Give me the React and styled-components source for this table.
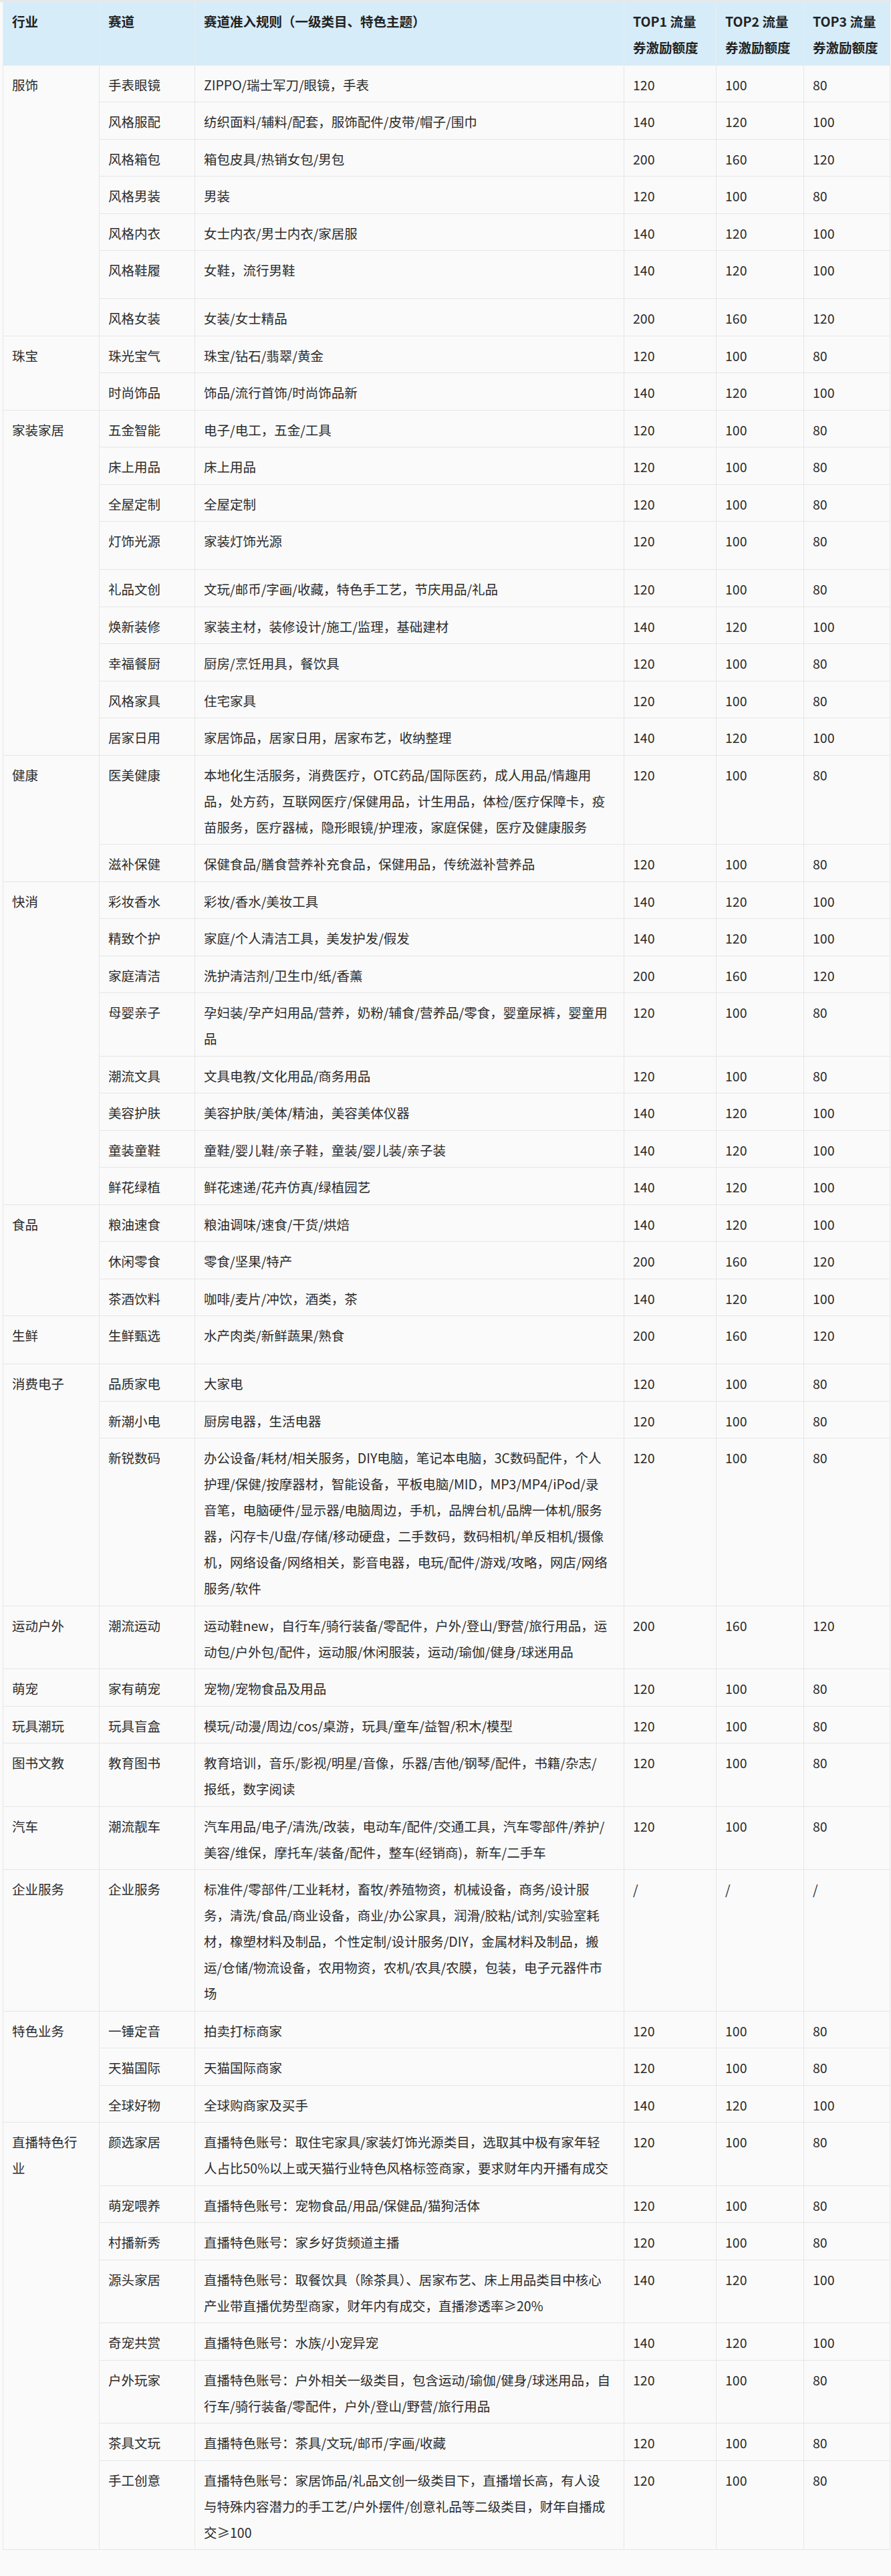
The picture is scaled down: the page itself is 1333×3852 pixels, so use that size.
import styled, { createGlobalStyle } from "styled-components";

const GlobalStyle = createGlobalStyle`
  body {
    margin: 0;
    background: #fafafa;
    color: #2b2b2b;
    font-family: "Noto Sans CJK SC", "Noto Sans", sans-serif;
  }
`;

const Page = styled.div`
  border-top: 3px solid #e8e8e8;
  padding: 0 2px 30px 4px;
`;

const Table = styled.table`
  width: 1327px;
  table-layout: fixed;
  border-collapse: collapse;
  border: 1px solid #e4e4e4;
  border-top: none;
  font-size: 19.5px;
  line-height: 39px;
`;

const Col = styled.col`
  width: ${(p) => p.$w}px;
`;

const HeadCell = styled.th`
  background: #d6ecf9;
  color: #222;
  font-weight: 700;
  text-align: left;
  vertical-align: top;
  white-space: pre-line;
  padding: 9px 13px 6.7px;
  border-left: 1px solid #e4eef4;
`;

const Row = styled.tr`
  height: ${(p) => (p.$tall ? "72px" : "auto")};
`;

const Cell = styled.td`
  vertical-align: top;
  white-space: pre-line;
  padding: 9px 13px 6.5px;
  border: 1px solid #e6e6e6;
`;

const cols = [144, 143, 642, 138, 131, 129];

const data = [
  {
    industry: "服饰",
    rows: [
      ["手表眼镜", "ZIPPO/瑞士军刀/眼镜，手表", [120, 100, 80]],
      ["风格服配", "纺织面料/辅料/配套，服饰配件/皮带/帽子/围巾", [140, 120, 100]],
      ["风格箱包", "箱包皮具/热销女包/男包", [200, 160, 120]],
      ["风格男装", "男装", [120, 100, 80]],
      ["风格内衣", "女士内衣/男士内衣/家居服", [140, 120, 100]],
      ["风格鞋履", "女鞋，流行男鞋", [140, 120, 100], true],
      ["风格女装", "女装/女士精品", [200, 160, 120]],
    ],
  },
  {
    industry: "珠宝",
    rows: [
      ["珠光宝气", "珠宝/钻石/翡翠/黄金", [120, 100, 80]],
      ["时尚饰品", "饰品/流行首饰/时尚饰品新", [140, 120, 100]],
    ],
  },
  {
    industry: "家装家居",
    rows: [
      ["五金智能", "电子/电工，五金/工具", [120, 100, 80]],
      ["床上用品", "床上用品", [120, 100, 80]],
      ["全屋定制", "全屋定制", [120, 100, 80]],
      ["灯饰光源", "家装灯饰光源", [120, 100, 80], true],
      ["礼品文创", "文玩/邮币/字画/收藏，特色手工艺，节庆用品/礼品", [120, 100, 80]],
      ["焕新装修", "家装主材，装修设计/施工/监理，基础建材", [140, 120, 100]],
      ["幸福餐厨", "厨房/烹饪用具，餐饮具", [120, 100, 80]],
      ["风格家具", "住宅家具", [120, 100, 80]],
      ["居家日用", "家居饰品，居家日用，居家布艺，收纳整理", [140, 120, 100]],
    ],
  },
  {
    industry: "健康",
    rows: [
      [
        "医美健康",
        "本地化生活服务，消费医疗，OTC药品/国际医药，成人用品/情趣用\n品，处方药，互联网医疗/保健用品，计生用品，体检/医疗保障卡，疫\n苗服务，医疗器械，隐形眼镜/护理液，家庭保健，医疗及健康服务",
        [120, 100, 80],
      ],
      ["滋补保健", "保健食品/膳食营养补充食品，保健用品，传统滋补营养品", [120, 100, 80]],
    ],
  },
  {
    industry: "快消",
    rows: [
      ["彩妆香水", "彩妆/香水/美妆工具", [140, 120, 100]],
      ["精致个护", "家庭/个人清洁工具，美发护发/假发", [140, 120, 100]],
      ["家庭清洁", "洗护清洁剂/卫生巾/纸/香薰", [200, 160, 120]],
      [
        "母婴亲子",
        "孕妇装/孕产妇用品/营养，奶粉/辅食/营养品/零食，婴童尿裤，婴童用\n品",
        [120, 100, 80],
      ],
      ["潮流文具", "文具电教/文化用品/商务用品", [120, 100, 80]],
      ["美容护肤", "美容护肤/美体/精油，美容美体仪器", [140, 120, 100]],
      ["童装童鞋", "童鞋/婴儿鞋/亲子鞋，童装/婴儿装/亲子装", [140, 120, 100]],
      ["鲜花绿植", "鲜花速递/花卉仿真/绿植园艺", [140, 120, 100]],
    ],
  },
  {
    industry: "食品",
    rows: [
      ["粮油速食", "粮油调味/速食/干货/烘焙", [140, 120, 100]],
      ["休闲零食", "零食/坚果/特产", [200, 160, 120]],
      ["茶酒饮料", "咖啡/麦片/冲饮，酒类，茶", [140, 120, 100]],
    ],
  },
  {
    industry: "生鲜",
    rows: [["生鲜甄选", "水产肉类/新鲜蔬果/熟食", [200, 160, 120], true]],
  },
  {
    industry: "消费电子",
    rows: [
      ["品质家电", "大家电", [120, 100, 80]],
      ["新潮小电", "厨房电器，生活电器", [120, 100, 80]],
      [
        "新锐数码",
        "办公设备/耗材/相关服务，DIY电脑，笔记本电脑，3C数码配件，个人\n护理/保健/按摩器材，智能设备，平板电脑/MID，MP3/MP4/iPod/录\n音笔，电脑硬件/显示器/电脑周边，手机，品牌台机/品牌一体机/服务\n器，闪存卡/U盘/存储/移动硬盘，二手数码，数码相机/单反相机/摄像\n机，网络设备/网络相关，影音电器，电玩/配件/游戏/攻略，网店/网络\n服务/软件",
        [120, 100, 80],
      ],
    ],
  },
  {
    industry: "运动户外",
    rows: [
      [
        "潮流运动",
        "运动鞋new，自行车/骑行装备/零配件，户外/登山/野营/旅行用品，运\n动包/户外包/配件，运动服/休闲服装，运动/瑜伽/健身/球迷用品",
        [200, 160, 120],
      ],
    ],
  },
  {
    industry: "萌宠",
    rows: [["家有萌宠", "宠物/宠物食品及用品", [120, 100, 80]]],
  },
  {
    industry: "玩具潮玩",
    rows: [["玩具盲盒", "模玩/动漫/周边/cos/桌游，玩具/童车/益智/积木/模型", [120, 100, 80]]],
  },
  {
    industry: "图书文教",
    rows: [
      [
        "教育图书",
        "教育培训，音乐/影视/明星/音像，乐器/吉他/钢琴/配件，书籍/杂志/\n报纸，数字阅读",
        [120, 100, 80],
      ],
    ],
  },
  {
    industry: "汽车",
    rows: [
      [
        "潮流靓车",
        "汽车用品/电子/清洗/改装，电动车/配件/交通工具，汽车零部件/养护/\n美容/维保，摩托车/装备/配件，整车(经销商)，新车/二手车",
        [120, 100, 80],
      ],
    ],
  },
  {
    industry: "企业服务",
    rows: [
      [
        "企业服务",
        "标准件/零部件/工业耗材，畜牧/养殖物资，机械设备，商务/设计服\n务，清洗/食品/商业设备，商业/办公家具，润滑/胶粘/试剂/实验室耗\n材，橡塑材料及制品，个性定制/设计服务/DIY，金属材料及制品，搬\n运/仓储/物流设备，农用物资，农机/农具/农膜，包装，电子元器件市\n场",
        ["/", "/", "/"],
      ],
    ],
  },
  {
    industry: "特色业务",
    rows: [
      ["一锤定音", "拍卖打标商家", [120, 100, 80]],
      ["天猫国际", "天猫国际商家", [120, 100, 80]],
      ["全球好物", "全球购商家及买手", [140, 120, 100]],
    ],
  },
  {
    industry: "直播特色行\n业",
    rows: [
      [
        "颜选家居",
        "直播特色账号：取住宅家具/家装灯饰光源类目，选取其中极有家年轻\n人占比50%以上或天猫行业特色风格标签商家，要求财年内开播有成交",
        [120, 100, 80],
      ],
      ["萌宠喂养", "直播特色账号：宠物食品/用品/保健品/猫狗活体", [120, 100, 80]],
      ["村播新秀", "直播特色账号：家乡好货频道主播", [120, 100, 80]],
      [
        "源头家居",
        "直播特色账号：取餐饮具（除茶具）、居家布艺、床上用品类目中核心\n产业带直播优势型商家，财年内有成交，直播渗透率≥20%",
        [140, 120, 100],
      ],
      ["奇宠共赏", "直播特色账号：水族/小宠异宠", [140, 120, 100]],
      [
        "户外玩家",
        "直播特色账号：户外相关一级类目，包含运动/瑜伽/健身/球迷用品，自\n行车/骑行装备/零配件，户外/登山/野营/旅行用品",
        [120, 100, 80],
      ],
      ["茶具文玩", "直播特色账号：茶具/文玩/邮币/字画/收藏", [120, 100, 80]],
      [
        "手工创意",
        "直播特色账号：家居饰品/礼品文创一级类目下，直播增长高，有人设\n与特殊内容潜力的手工艺/户外摆件/创意礼品等二级类目，财年自播成\n交≥100",
        [120, 100, 80],
      ],
    ],
  },
];

const headers = [
  "行业",
  "赛道",
  "赛道准入规则（一级类目、特色主题）",
  "TOP1 流量\n券激励额度",
  "TOP2 流量\n券激励额度",
  "TOP3 流量\n券激励额度",
];

const App = () => {
  return (
    <Page>
      <GlobalStyle />
      <Table>
        <colgroup>
          {cols.map((w, i) => (
            <Col key={i} $w={w} />
          ))}
        </colgroup>
        <thead>
          <tr>
            {headers.map((h) => (
              <HeadCell key={h}>{h}</HeadCell>
            ))}
          </tr>
        </thead>
        <tbody>
          {data.map((group) =>
            group.rows.map(([track, rule, tops, tall], i) => (
              <Row key={group.industry + track} $tall={tall}>
                {i === 0 && <Cell rowSpan={group.rows.length}>{group.industry}</Cell>}
                <Cell>{track}</Cell>
                <Cell>{rule}</Cell>
                {tops.map((v, j) => (
                  <Cell key={j}>{v}</Cell>
                ))}
              </Row>
            ))
          )}
        </tbody>
      </Table>
    </Page>
  );
};

export default App;
